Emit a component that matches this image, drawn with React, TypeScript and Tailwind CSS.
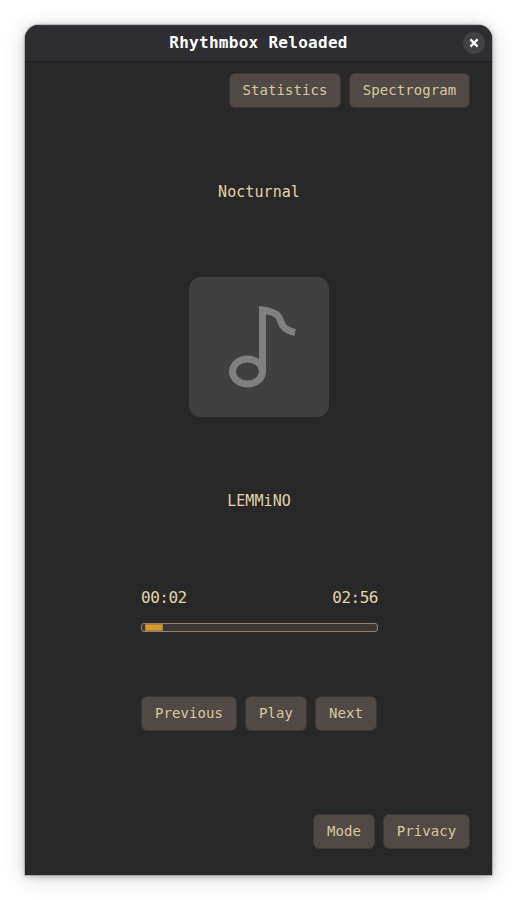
import type { ReactNode } from "react";

function Button({ children, width }: { children: ReactNode; width: string }) {
  return (
    <button
      className={`${width} h-[35px] shrink-0 whitespace-nowrap rounded-[6px] border border-[#3c3836] bg-[#504945] pb-px text-center text-[14px] leading-none tracking-[0.07px] text-[#d8c9a0]`}
    >
      {children}
    </button>
  );
}

export default function App() {
  return (
    <div className="h-[900px] w-[517px] overflow-hidden bg-white p-[25px] font-['DejaVu_Sans_Mono',monospace]">
      <main className="flex h-[850px] w-[467px] flex-col overflow-hidden rounded-t-[14px] bg-[#282828] text-[#e2d3aa] shadow-[0_0_0_1px_rgba(0,0,0,0.16),0_1px_6px_rgba(0,0,0,0.25),0_3px_22px_rgba(0,0,0,0.18)]">
        <header className="grid h-[37px] shrink-0 grid-cols-[1fr_auto_1fr] items-center border-b border-[#1f1f21] bg-[#2e2d32] shadow-[inset_0_1px_0_#3b3a3e]">
          <span />
          <h1 className="pb-px text-[16px] font-bold leading-none tracking-[0.28px] text-white">Rhythmbox Reloaded</h1>
          <button aria-label="Close" className="mr-[7px] flex size-[22px] items-center justify-center justify-self-end rounded-full bg-[#424146]">
            <svg viewBox="0 0 10 10" className="size-[10px]" fill="none" stroke="white" strokeWidth="2.2">
              <path d="M1.4 1.4 8.6 8.6M8.6 1.4 1.4 8.6" />
            </svg>
          </button>
        </header>
        <nav className="mt-[11px] flex justify-end gap-[8px] pr-[22px]">
          <Button width="w-[112px]">Statistics</Button>
          <Button width="w-[121px]">Spectrogram</Button>
        </nav>
        <p className="mt-[74px] h-[20px] pl-px text-center text-[15px] leading-[20px] tracking-[0.07px]">Nocturnal</p>
        <div className="ml-[164px] mt-[75px] size-[140px] shrink-0 rounded-[12px] bg-[#404040]">
          <svg viewBox="0 0 140 140" className="size-[140px]" fill="none" stroke="#808080" strokeWidth="7">
            <ellipse cx="58.5" cy="94.5" rx="15" ry="12.5" />
            <path d="M73.5 95V33C80 34 87 35.5 89.5 39.5C93 45 91 52 106 55.5" />
          </svg>
        </div>
        <p className="mt-[74px] h-[20px] pl-px text-center text-[15px] leading-[20px] tracking-[0.07px]">LEMMiNO</p>
        <section className="ml-[116px] mt-[77px] w-[237px]">
          <div className="flex h-[20px] justify-between text-[16px] leading-[20px] tracking-[-0.5px]">
            <span>00:02</span>
            <span>02:56</span>
          </div>
          <div className="mt-[15px] flex h-[9px] rounded-[3px] border border-[#928374] bg-[#3c3836] pl-[3px]">
            <div className="h-[7px] w-[18px] border border-[#a58045] bg-[#d79921]" />
          </div>
          <div className="mt-[64px] flex gap-[8px]">
            <Button width="w-[96px]">Previous</Button>
            <Button width="w-[62px]">Play</Button>
            <Button width="w-[62px]">Next</Button>
          </div>
        </section>
        <footer className="mt-[83px] flex justify-end gap-[8px] pr-[22px]">
          <Button width="w-[62px]">Mode</Button>
          <Button width="w-[87px]">Privacy</Button>
        </footer>
      </main>
    </div>
  );
}
